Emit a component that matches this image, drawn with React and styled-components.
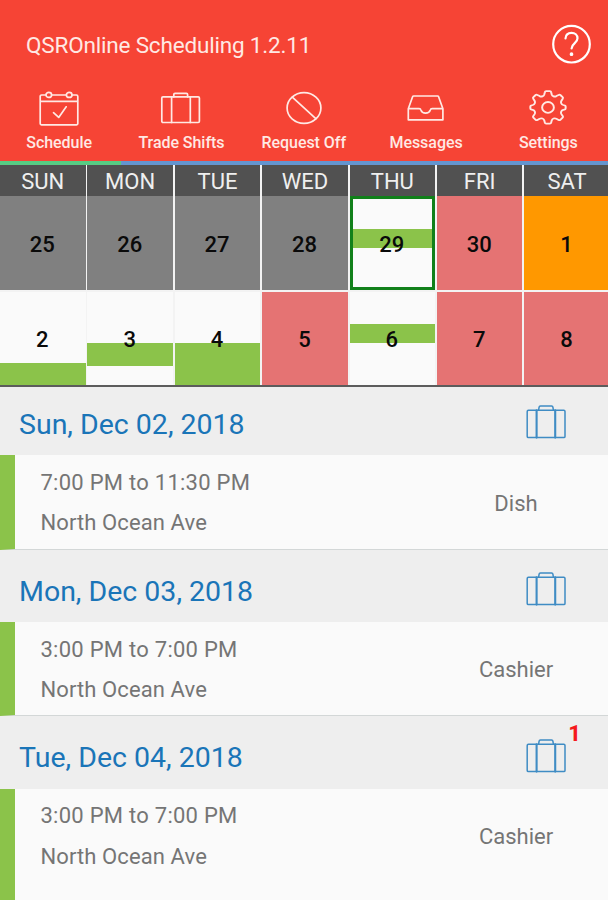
import React from 'react'
import styled, { createGlobalStyle } from 'styled-components'

const GlobalStyle = createGlobalStyle`
*{
  box-sizing:border-box;
}
body{
  margin:0;
  background-color:#fafafa;
  font-family:Roboto, sans-serif;
}
`

const Container = styled.div`
width:608px;
height:900px;
overflow:hidden;
display:flex;
flex-direction:column;
background-color:#fafafa;
`

const Header = styled.header`
height:161px;
flex-shrink:0;
background-color:#f64435;
color:#ffe9e4;
display:flex;
flex-direction:column;
`

const TitleBar = styled.div`
height:89px;
padding:0 16px 0 26px;
display:flex;
align-items:center;
justify-content:space-between;
`

const Title = styled.h1`
margin:0;
font-size:22.5px;
font-weight:400;
letter-spacing:-0.18px;
white-space:nowrap;
`

const HelpButton = styled.button`
border:none;
padding:0;
background:none;
color:white;
display:flex;
`

const Tabs = styled.nav`
display:grid;
grid-template-columns:repeat(5, 122.3px);
margin:1px 0 0 -2px;
`

const Tab = styled.div`
display:flex;
flex-direction:column;
align-items:center;
gap:5px;
white-space:nowrap;
font-size:16px;
font-weight:500;
line-height:20px;
letter-spacing:-0.05px;
`

const Icon = styled.svg`
display:block;
flex-shrink:0;
fill:none;
stroke:currentColor;
stroke-width:${props => props.$stroke || 1.7};
stroke-linecap:round;
stroke-linejoin:round;
`

const Indicator = styled.div`
height:3.5px;
flex-shrink:0;
background:linear-gradient(to right, #57cb83 121.5px, #6495cf 121.5px);
`

const Calendar = styled.div`
flex-shrink:0;
height:222.5px;
display:grid;
grid-template-columns:repeat(7, 85.5px);
grid-template-rows:31.5px 94px 95px;
column-gap:1.9px;
overflow:hidden;
background-color:#f3f3f3;
border-bottom:2px solid #5c5c5c;
`

const Weekday = styled.div`
display:flex;
align-items:center;
justify-content:center;
padding-top:3px;
background-color:#515151;
color:#efefef;
font-size:22px;
`

const dayColors = {
  past: '#808080',
  open: '#fafafa',
  off: '#e57373',
  holiday: '#ff9800',
}

const Day = styled.div`
position:relative;
display:flex;
align-items:center;
justify-content:center;
margin-top:${props => (props.$second ? '2px' : '0')};
padding:${props => (props.$second ? '2px' : '3px')} 1px 0 0;
background-color:${props => dayColors[props.$kind]};
color:#0a0a0a;
font-size:22px;
font-weight:500;
`

const ShiftBar = styled.div`
position:absolute;
left:0;
right:0;
top:${props => props.$top}px;
height:${props => props.$height}px;
background-color:#8bc34a;
`

const TodayFrame = styled.div`
position:absolute;
inset:0;
border:3px solid #11801a;
`

const DayNumber = styled.span`
position:relative;
`

const ShiftList = styled.main`
flex:1;
overflow:hidden;
`

const Shift = styled.section`
height:${props => (props.$last ? '190px' : '166.8px')};
margin-top:${props => (props.$first ? '-4.3px' : '0')};
display:flex;
flex-direction:column;
`

const ShiftHeader = styled.div`
height:72.3px;
flex-shrink:0;
padding:7px 42px 0 19px;
display:flex;
align-items:center;
justify-content:space-between;
background-color:#eeeeee;
color:#1a75b8;
`

const ShiftDate = styled.h2`
margin:4px 0 0;
font-size:28.5px;
font-weight:400;
`

const TradeButton = styled.div`
position:relative;
display:flex;
color:#3f8cc4;
`

const Badge = styled.span`
position:absolute;
right:-15px;
top:-16px;
line-height:22px;
font-size:22px;
font-weight:800;
color:#f5191c;
`

const ShiftBody = styled.div`
flex:1;
display:flex;
align-items:flex-start;
border-left:15.5px solid #8bc34a;
border-bottom:${props => (props.$last ? 'none' : '1.3px solid #d3d7d7')};
color:#757575;
font-size:22px;
`

const ShiftInfo = styled.div`
flex:1;
padding:7.8px 0 0 25.5px;
display:flex;
flex-direction:column;
line-height:40.6px;
`

const ShiftTime = styled.span`
letter-spacing:0.26px;
`

const ShiftPlace = styled.span`
letter-spacing:0.1px;
`

const Role = styled.div`
width:184px;
text-align:center;
line-height:26px;
padding-top:35.5px;
`

const ScheduleIcon = () => (
  <Icon width="42" height="38" viewBox="0 0 42 38">
    <path d="M7.5 5H3.6a1.4 1.4 0 0 0-1.4 1.4v27.2a1.2 1.2 0 0 0 1.2 1.2h35.2a1.2 1.2 0 0 0 1.2-1.2V6.4A1.4 1.4 0 0 0 38.4 5h-3.9M14 5h14M2.2 11.3h37.6" />
    <ellipse cx="10.8" cy="4.9" rx="2.8" ry="2.5" />
    <ellipse cx="31.2" cy="4.9" rx="2.8" ry="2.5" />
    <path d="M15.5 22.7l5.2 4.7 7.5-10.6" />
  </Icon>
)

const Suitcase = () => (
  <Icon width="42" height="38" viewBox="0 0 42 38">
    <rect x="1.8" y="6.8" width="37.6" height="25.7" rx="1.2" />
    <path d="M11.6 6.8v25.7M30.3 6.8v25.7M13.8 6.8V4.6A1.2 1.2 0 0 1 15 3.4h11.4a1.2 1.2 0 0 1 1.2 1.2v2.2" />
  </Icon>
)

const LargeSuitcase = () => (
  <Icon width="40" height="34" viewBox="0 0 40 34" $stroke={1.5}>
    <rect x="1.2" y="5.2" width="37.8" height="27.4" rx="1.2" />
    <path d="M10.6 5.2v27.4M29.2 5.2v27.4" strokeWidth="2.1" />
    <path d="M12.6 5.2l.5-3a1.3 1.3 0 0 1 1.3-1.1h11.2a1.3 1.3 0 0 1 1.3 1.1l.5 3" />
  </Icon>
)

const RequestIcon = () => (
  <Icon width="42" height="38" viewBox="0 0 42 38">
    <ellipse cx="21" cy="18" rx="16.9" ry="15.3" />
    <path d="M9.3 7.2l23.5 21.4" />
  </Icon>
)

const MessagesIcon = () => (
  <Icon width="42" height="38" viewBox="0 0 42 38">
    <path d="M3.3 18.7L7.6 6.8a1.2 1.2 0 0 1 1.1-.8h23.8a1.2 1.2 0 0 1 1.1.8l4.3 11.9v11.1H3.3V18.7h10.8q1.5 0 1.8 1.2a4.9 4.4 0 0 0 9.4 0q.3-1.2 1.8-1.2h10.8" />
  </Icon>
)

const SettingsIcon = () => (
  <Icon width="42" height="38" viewBox="0 0 42 38" $stroke={1.8}>
    <g transform="translate(21 17.4) scale(1.09 1)">
      <path d="M-1.7-16.2h3.4q1 0 1.2 1l.5 2.2q.4 1.4 1.7 1.9t2.6-.2l2-1.2q.9-.6 1.6.1l2.1 2.1q.7.7.1 1.6l-1.2 2q-.7 1.3-.2 2.6t1.9 1.7l1.2.3q1 .2 1 1.2v1.8q0 1-1 1.2l-1.2.3q-1.4.4-1.9 1.7t.2 2.6l1.2 2q.6.9-.1 1.6l-2.1 2.1q-.7.7-1.6.1l-2-1.2q-1.3-.7-2.6-.2t-1.7 1.9l-.5 2.2q-.2 1-1.2 1h-3.4q-1 0-1.2-1l-.5-2.2q-.4-1.4-1.7-1.9t-2.6.2l-2 1.2q-.9.6-1.6-.1l-2.1-2.1q-.7-.7-.1-1.6l1.2-2q.7-1.3.2-2.6t-1.9-1.7l-1.2-.3q-1-.2-1-1.2v-1.8q0-1 1-1.2l1.2-.3q1.4-.4 1.9-1.7t-.2-2.6l-1.2-2q-.6-.9.1-1.6l2.1-2.1q.7-.7 1.6-.1l2 1.2q1.3.7 2.6.2t1.7-1.9l.5-2.2q.2-1 1.2-1z" />
      <circle r="5.4" />
    </g>
  </Icon>
)

const HelpIcon = () => (
  <Icon width="41" height="41" viewBox="0 0 41 41" $stroke={2.2}>
    <circle cx="20.5" cy="20.2" r="18.3" />
    <path d="M14.5 14.5c.2-3.5 2.6-5.6 6-5.6s6 2.1 6 5.4c0 5.2-5.9 5.1-5.9 10.2" />
    <circle cx="20.5" cy="30.2" r="1" fill="currentColor" strokeWidth="1.7" />
  </Icon>
)

const tabs = [
  { label: 'Schedule', icon: <ScheduleIcon /> },
  { label: 'Trade Shifts', icon: <Suitcase /> },
  { label: 'Request Off', icon: <RequestIcon /> },
  { label: 'Messages', icon: <MessagesIcon /> },
  { label: 'Settings', icon: <SettingsIcon /> },
]

const weekdays = ['SUN', 'MON', 'TUE', 'WED', 'THU', 'FRI', 'SAT']

const days = [
  { day: 25, kind: 'past' },
  { day: 26, kind: 'past' },
  { day: 27, kind: 'past' },
  { day: 28, kind: 'past' },
  { day: 29, kind: 'open', today: true, bar: [33, 19.3] },
  { day: 30, kind: 'off' },
  { day: 1, kind: 'holiday' },
  { day: 2, kind: 'open', bar: [70.5, 23] },
  { day: 3, kind: 'open', bar: [51.3, 23.2] },
  { day: 4, kind: 'open', bar: [51.3, 42] },
  { day: 5, kind: 'off' },
  { day: 6, kind: 'open', bar: [32.3, 19.2] },
  { day: 7, kind: 'off' },
  { day: 8, kind: 'off' },
]

const shifts = [
  { date: 'Sun, Dec 02, 2018', time: '7:00 PM to 11:30 PM', place: 'North Ocean Ave', role: 'Dish' },
  { date: 'Mon, Dec 03, 2018', time: '3:00 PM to 7:00 PM', place: 'North Ocean Ave', role: 'Cashier' },
  { date: 'Tue, Dec 04, 2018', time: '3:00 PM to 7:00 PM', place: 'North Ocean Ave', role: 'Cashier', trades: 1 },
]

const App = () => {
  return (
    <Container>
      <GlobalStyle />
      <Header>
        <TitleBar>
          <Title>QSROnline Scheduling 1.2.11</Title>
          <HelpButton aria-label="Help">
            <HelpIcon />
          </HelpButton>
        </TitleBar>
        <Tabs>
          {tabs.map(tab => (
            <Tab key={tab.label}>
              {tab.icon}
              {tab.label}
            </Tab>
          ))}
        </Tabs>
      </Header>
      <Indicator />
      <Calendar>
        {weekdays.map(name => (
          <Weekday key={name}>{name}</Weekday>
        ))}
        {days.map((item, i) => (
          <Day key={item.day} $kind={item.kind} $second={i > 6}>
            {item.bar && <ShiftBar $top={item.bar[0]} $height={item.bar[1]} />}
            {item.today && <TodayFrame />}
            <DayNumber>{item.day}</DayNumber>
          </Day>
        ))}
      </Calendar>
      <ShiftList>
        {shifts.map((shift, i) => (
          <Shift key={shift.date} $first={i === 0} $last={i === shifts.length - 1}>
            <ShiftHeader>
              <ShiftDate>{shift.date}</ShiftDate>
              <TradeButton>
                <LargeSuitcase />
                {shift.trades && <Badge>{shift.trades}</Badge>}
              </TradeButton>
            </ShiftHeader>
            <ShiftBody $last={i === shifts.length - 1}>
              <ShiftInfo>
                <ShiftTime>{shift.time}</ShiftTime>
                <ShiftPlace>{shift.place}</ShiftPlace>
              </ShiftInfo>
              <Role>{shift.role}</Role>
            </ShiftBody>
          </Shift>
        ))}
      </ShiftList>
    </Container>
  )
}

export default App
